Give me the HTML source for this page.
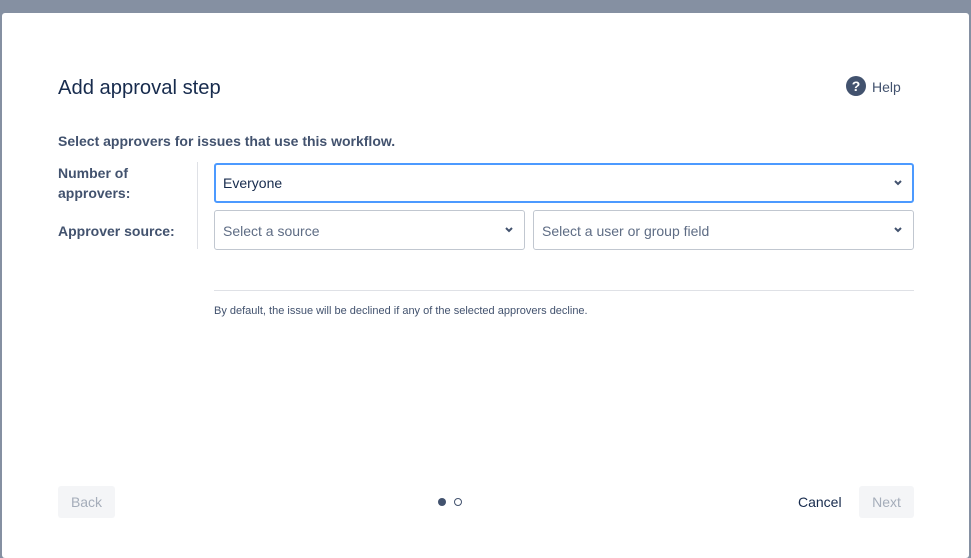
<!DOCTYPE html>
<html><head><style>
*{box-sizing:border-box;margin:0;padding:0}
body{width:971px;height:552px;background:#8590a2;font-family:"Liberation Sans",sans-serif;color:#172b4d;position:relative;overflow:hidden}
.m{position:absolute;left:2px;top:13px;width:967px;height:545px;background:#fff;border-radius:3px}
.a{position:absolute}
h1{position:absolute;left:56px;top:64px;font-size:20.2px;font-weight:normal;color:#172b4d}
.sel{position:absolute;height:40px;border:1px solid #c1c7d0;border-radius:3px;font-size:14px;line-height:40px;padding-left:8px;color:#5e6c84}
.sel svg{position:absolute;right:10px;top:15px}
.lab{position:absolute;left:56px;font-size:14px;font-weight:bold;color:#42526e;line-height:20px}
</style></head><body>
<div class="m">
<h1>Add approval step</h1>
<svg class="a" style="left:844px;top:63px" width="20" height="20" viewBox="0 0 20 20"><circle cx="10" cy="10" r="10" fill="#42526e"/><text x="10" y="15" font-size="14" font-weight="bold" fill="#fff" text-anchor="middle" font-family="Liberation Sans">?</text></svg>
<div class="a" style="left:870px;top:66px;font-size:14px;color:#42526e">Help</div>
<div class="a" style="left:56px;top:120px;font-size:14px;font-weight:bold;color:#42526e">Select approvers for issues that use this workflow.</div>
<div class="lab" style="top:150px">Number of<br>approvers:</div>
<div class="lab" style="top:208px">Approver source:</div>
<div class="a" style="left:195px;top:149px;width:1px;height:87px;background:#dfe1e6"></div>
<div class="sel" style="left:212px;top:150px;width:700px;border:2px solid #4c9aff;color:#172b4d;line-height:36px;padding-left:7px">Everyone<svg width="10" height="8" viewBox="0 0 10 8" style="top:14px;right:9px"><path d="M2 2l3 3 3-3" stroke="#42526e" stroke-width="2" fill="none"/></svg></div>
<div class="sel" style="left:212px;top:197px;width:311px">Select a source<svg width="10" height="8" viewBox="0 0 10 8"><path d="M2 2l3 3 3-3" stroke="#42526e" stroke-width="2" fill="none"/></svg></div>
<div class="sel" style="left:531px;top:197px;width:381px">Select a user or group field<svg width="10" height="8" viewBox="0 0 10 8"><path d="M2 2l3 3 3-3" stroke="#42526e" stroke-width="2" fill="none"/></svg></div>
<div class="a" style="left:212px;top:277px;width:700px;height:1px;background:#dfe1e6"></div>
<div class="a" style="left:212px;top:292px;font-size:11px;color:#42526e">By default, the issue will be declined if any of the selected approvers decline.</div>
<div class="a" style="left:56px;top:473px;width:57px;height:32px;background:#f4f5f7;border-radius:3px;font-size:14px;color:#a5adba;text-align:center;line-height:32px">Back</div>
<div class="a" style="left:436px;top:485px;width:8px;height:8px;border-radius:50%;background:#42526e"></div>
<div class="a" style="left:452px;top:485px;width:8px;height:8px;border-radius:50%;border:1px solid #42526e"></div>
<div class="a" style="left:796px;top:473px;font-size:14px;line-height:32px;color:#172b4d">Cancel</div>
<div class="a" style="left:857px;top:473px;width:55px;height:32px;background:#f4f5f7;border-radius:3px;font-size:14px;color:#a5adba;text-align:center;line-height:32px">Next</div>
</div>
</body></html>
